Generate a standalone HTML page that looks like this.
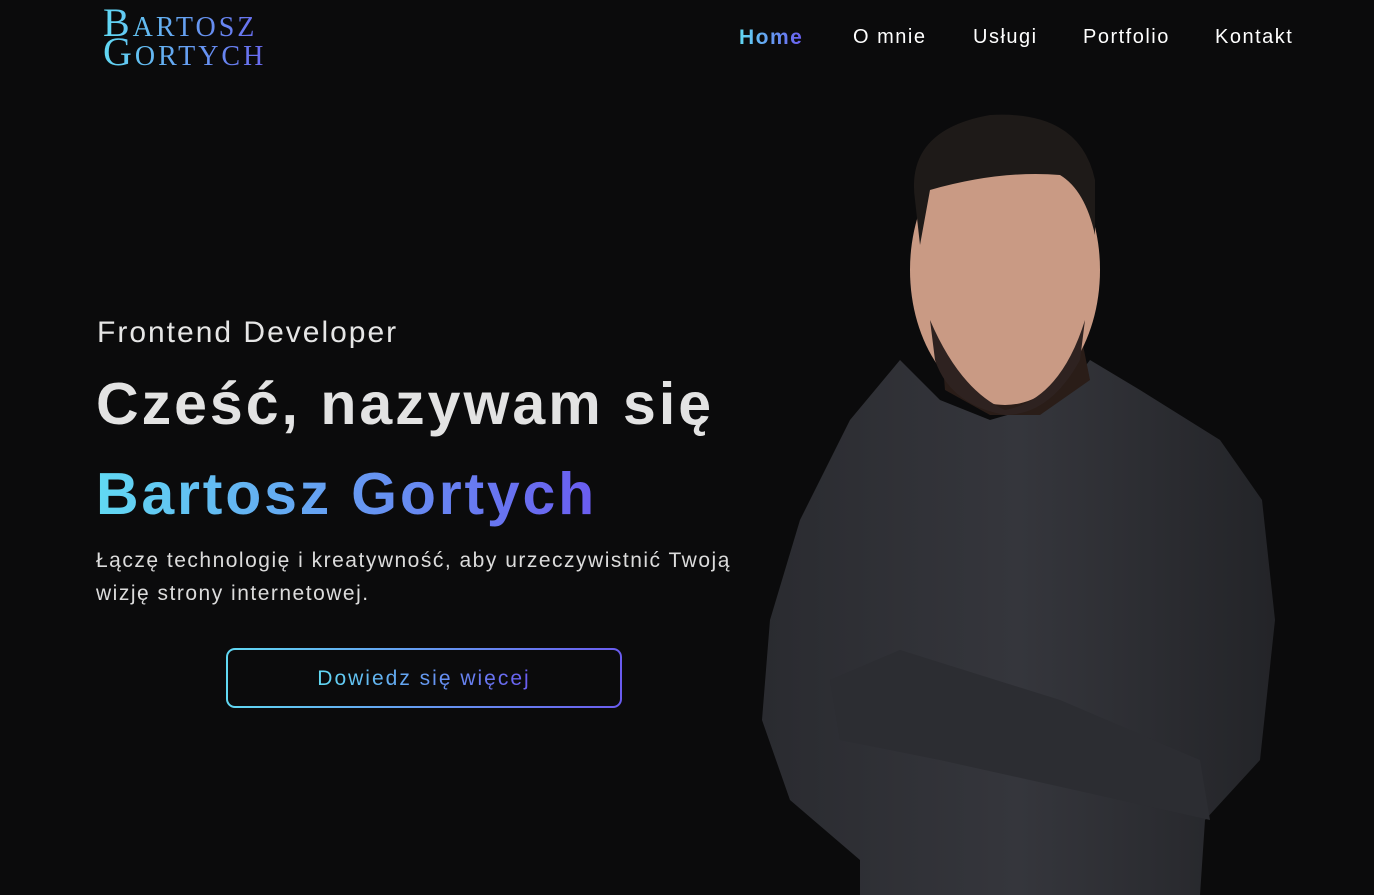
<!DOCTYPE html>
<html><head><meta charset="utf-8"><style>
*{margin:0;padding:0;box-sizing:border-box}
body{width:1374px;height:895px;background:#0b0b0c;overflow:hidden;position:relative;font-family:"Liberation Sans",sans-serif;color:#e0e0e0}
.grad{background:linear-gradient(90deg,#61d9f3,#6a5cf0);-webkit-background-clip:text;background-clip:text;color:transparent}
.logo{position:absolute;left:103px;top:8px;font-family:"Liberation Serif",serif;font-variant:small-caps;font-size:40px;line-height:29px;letter-spacing:3px}
.logo span{display:block;width:180px}
nav{position:absolute;top:26px;left:0;width:1374px;font-size:20px;color:#fff;letter-spacing:1.5px}
nav a{position:absolute;color:#fff;text-decoration:none}
.h1{position:absolute;left:97px;top:316px;font-size:30px;color:#e6e6e6;letter-spacing:2px}
.h2{position:absolute;left:96px;top:370px;font-size:59px;font-weight:bold;color:#e3e3e3;letter-spacing:3px}
.h3{position:absolute;left:96px;top:460px;font-size:59px;font-weight:bold;letter-spacing:2.8px}
.p{position:absolute;left:96px;top:544px;font-size:21px;line-height:33px;color:#dcdcdc;letter-spacing:1.5px}
.btn{position:absolute;left:226px;top:648px;width:396px;height:60px;border-radius:9px;padding:2px;background:linear-gradient(90deg,#61d9f3,#6a5cf0)}
.btn div{width:100%;height:100%;background:#0b0b0c;border-radius:7px;text-align:center;line-height:58px;font-size:21px;letter-spacing:2px}
</style></head><body>
<div class="logo grad"><span>Bartosz</span><span>Gortych</span></div>
<nav>
<a style="left:739px;top:0;font-weight:bold;font-size:21px" class="grad">Home</a>
<a style="left:853px">O mnie</a>
<a style="left:973px">Usługi</a>
<a style="left:1083px">Portfolio</a>
<a style="left:1215px">Kontakt</a>
</nav>
<svg style="position:absolute;left:0;top:0" width="1374" height="895">
<defs><linearGradient id="sh" x1="0" x2="1"><stop offset="0" stop-color="#2a2b30"/><stop offset="0.5" stop-color="#35363c"/><stop offset="1" stop-color="#232428"/></linearGradient></defs>
<path d="M900 360 L850 420 L800 520 L770 620 L762 720 L790 800 L860 860 L860 895 L1200 895 L1205 820 L1260 760 L1275 620 L1262 500 L1220 440 L1140 390 L1090 360 L1060 400 L990 420 L940 400 Z" fill="url(#sh)"/>
<path d="M830 680 L900 650 L1060 700 L1200 760 L1210 820 L1120 800 L940 760 L840 740 Z" fill="#2c2d32"/>
<path d="M940 330 L1080 330 L1090 380 L1040 415 L990 415 L945 390 Z" fill="#2a1d18"/>
<ellipse cx="1005" cy="270" rx="95" ry="135" fill="#c99a84"/>
<path d="M915 200 Q905 130 990 115 Q1080 110 1095 180 L1095 235 Q1085 190 1060 175 Q1000 170 930 190 L920 245 Z" fill="#1e1a18"/>
<path d="M930 320 Q960 390 1005 410 Q1060 400 1085 320 L1080 360 Q1050 415 1005 415 Q950 405 935 360 Z" fill="#2e2220"/>
</svg>
<div class="h1">Frontend Developer</div>
<div class="h2">Cześć, nazywam się</div>
<div class="h3 grad">Bartosz Gortych</div>
<div class="p">Łączę technologię i kreatywność, aby urzeczywistnić Twoją<br>wizję strony internetowej.</div>
<div class="btn"><div><span class="grad">Dowiedz się więcej</span></div></div>
</body></html>
